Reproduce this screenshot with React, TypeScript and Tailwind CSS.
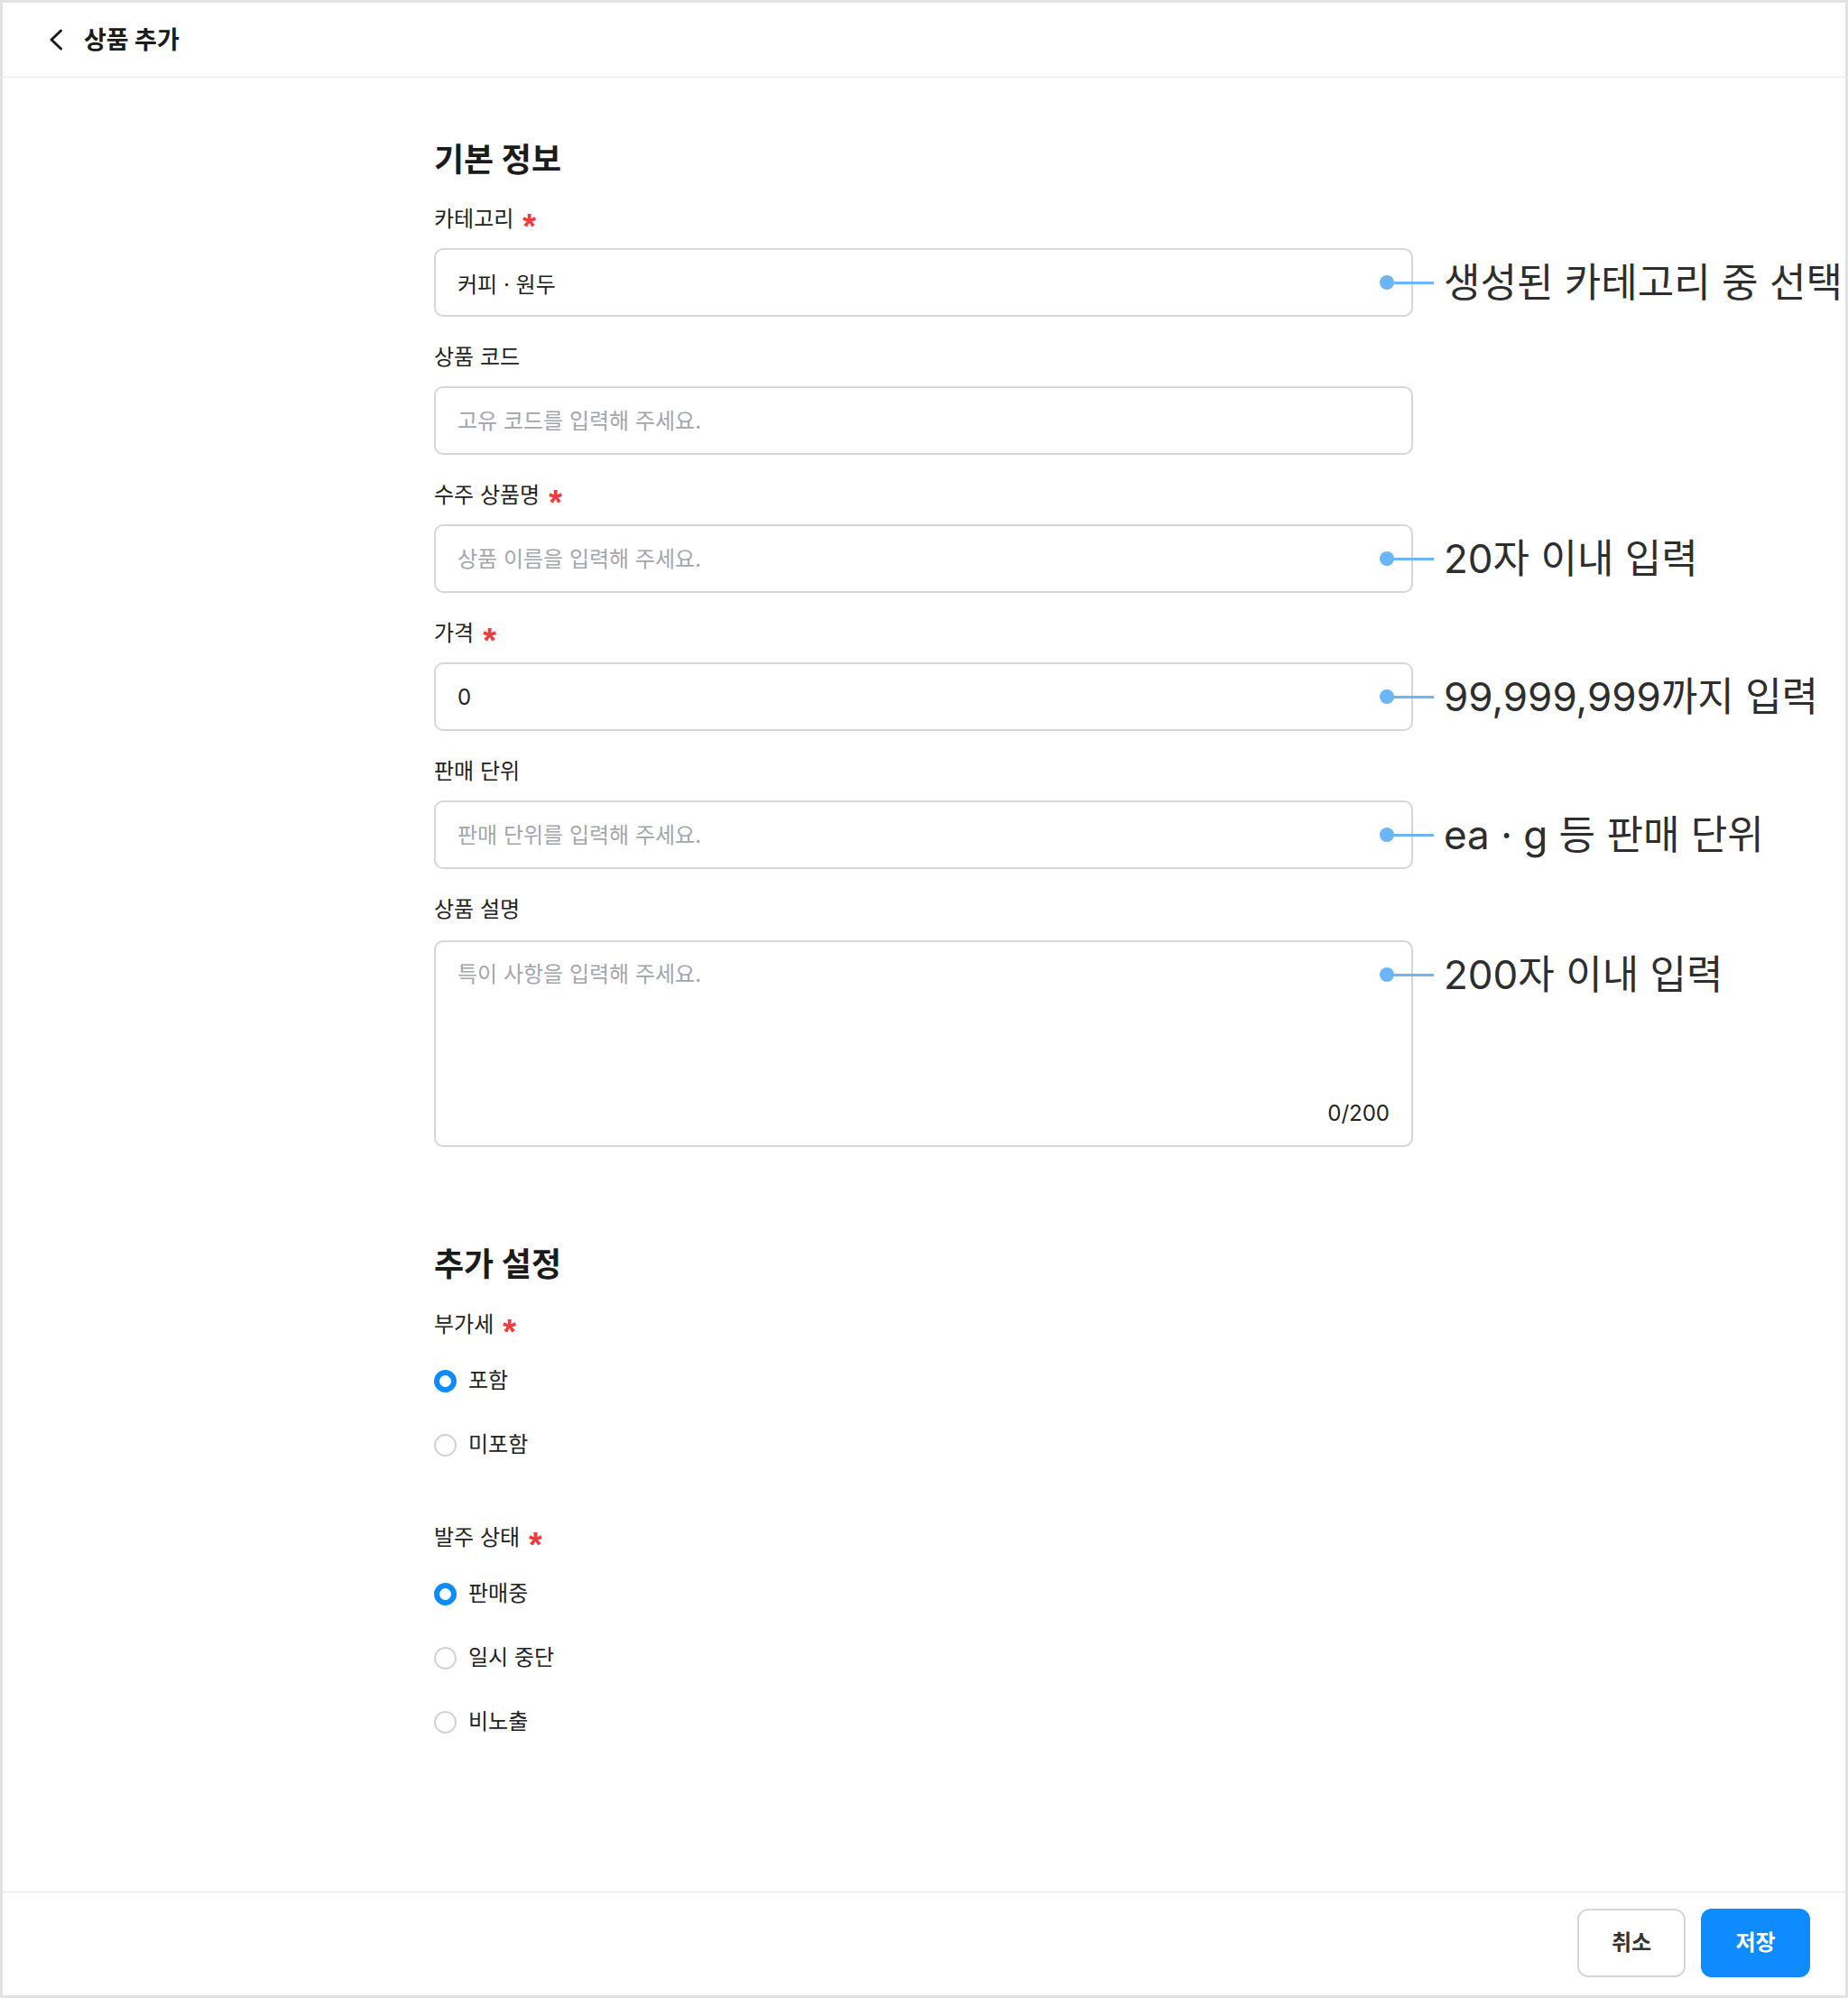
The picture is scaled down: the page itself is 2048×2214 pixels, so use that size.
import type { ReactNode } from "react";

const ui = "font-['Inter','Noto_Sans_CJK_KR',sans-serif]";

function Star() {
  return (
    <span className="relative top-[8px] font-['Liberation_Sans',sans-serif] text-[38px] font-bold leading-none text-[#f23a3f]">
      *
    </span>
  );
}

function Label({ children, required }: { children: ReactNode; required?: boolean }) {
  return (
    <div className="flex h-[30px] items-center gap-[10px] text-[24px] leading-[30px] text-[#222]">
      <span>{children}</span>
      {required && <Star />}
    </div>
  );
}

function Callout({ text }: { text: string }) {
  return (
    <div className="pointer-events-none absolute left-[1048px] top-[38px] flex -translate-y-1/2 items-center">
      <span className="h-4 w-4 rounded-full bg-[#6cb6f8]" />
      <span className="-ml-1 h-[3px] w-[48px] bg-[#6cb6f8]" />
      <span className="ml-[11px] whitespace-nowrap font-['Inter','Noto_Sans_CJK_KR',sans-serif] text-[44px] leading-none text-[#2e2e2e]">
        {text}
      </span>
    </div>
  );
}

function Field({
  label,
  required,
  value,
  placeholder,
  note,
}: {
  label: string;
  required?: boolean;
  value?: string;
  placeholder?: string;
  note?: string;
}) {
  return (
    <div className="flex flex-col gap-[17px]">
      <Label required={required}>{label}</Label>
      <div className="relative h-[76px] w-[1085px]">
        <input
          readOnly
          value={value ?? ""}
          placeholder={placeholder}
          className="h-full w-full rounded-[10px] border-2 border-[#d7d7d9] bg-white px-[24px] text-[24px] text-[#222] outline-none placeholder:text-[#a3a6ad]"
        />
        {note && <Callout text={note} />}
      </div>
    </div>
  );
}

function Radio({ label, checked }: { label: string; checked?: boolean }) {
  return (
    <label className="flex h-[30px] items-center gap-[13px] text-[24px] text-[#222]">
      <span
        className={
          checked
            ? "h-[25px] w-[25px] rounded-full border-[6px] border-[#0d8bff] bg-white"
            : "h-[25px] w-[25px] rounded-full border-2 border-[#d2d2d4] bg-white"
        }
      />
      {label}
    </label>
  );
}

export default function App() {
  return (
    <div className={`flex h-[2214px] w-[2048px] flex-col overflow-hidden border-[3px] border-[#e2e2e2] bg-white ${ui}`}>
      <header className="flex h-[83px] shrink-0 items-center gap-[23px] border-b border-[#e8e8e8] pl-[51px]">
        <svg width="16" height="24" viewBox="0 0 16 24" fill="none">
          <path d="M13.5 2 L3 12 L13.5 22" stroke="#1b1b1b" strokeWidth="3" strokeLinecap="round" strokeLinejoin="round" />
        </svg>
        <h1 className="text-[27px] font-bold leading-none text-[#1b1b1b]">상품 추가</h1>
      </header>

      <main className="flex-1 pl-[478px] pt-[69px]">
        <h2 className="h-[44px] text-[36px] font-bold leading-[44px] text-[#1b1b1b]">기본 정보</h2>
        <div className="mt-[29px] flex flex-col gap-[30px]">
          <Field label="카테고리" required value="커피 · 원두" note="생성된 카테고리 중 선택" />
          <Field label="상품 코드" placeholder="고유 코드를 입력해 주세요." />
          <Field label="수주 상품명" required placeholder="상품 이름을 입력해 주세요." note="20자 이내 입력" />
          <Field label="가격" required value="0" note="99,999,999까지 입력" />
          <Field label="판매 단위" placeholder="판매 단위를 입력해 주세요." note="ea · g 등 판매 단위" />
          <div className="flex flex-col gap-[19px]">
            <Label>상품 설명</Label>
            <div className="relative h-[229px] w-[1085px]">
              <textarea
                readOnly
                placeholder="특이 사항을 입력해 주세요."
                className="h-full w-full resize-none rounded-[10px] border-2 border-[#d7d7d9] bg-white px-[24px] pt-[21px] text-[24px] leading-[30px] text-[#222] outline-none placeholder:text-[#a3a6ad]"
              />
              <span className="absolute bottom-[22px] right-[26px] text-[24px] leading-[30px] text-[#222]">0/200</span>
              <Callout text="200자 이내 입력" />
            </div>
          </div>
        </div>

        <h2 className="mt-[108px] h-[44px] text-[36px] font-bold leading-[44px] text-[#1b1b1b]">추가 설정</h2>
        <div className="mt-[30px]">
          <Label required>부가세</Label>
        </div>
        <div className="mt-[32px] flex flex-col gap-[41px]">
          <Radio label="포함" checked />
          <Radio label="미포함" />
        </div>

        <div className="mt-[73px]">
          <Label required>발주 상태</Label>
        </div>
        <div className="mt-[32px] flex flex-col gap-[41px]">
          <Radio label="판매중" checked />
          <Radio label="일시 중단" />
          <Radio label="비노출" />
        </div>
      </main>

      <footer className="flex h-[115px] shrink-0 items-start justify-end gap-[17px] border-t border-[#e8e8e8] pr-[39px] pt-[18px]">
        <button className="h-[76px] w-[120px] rounded-[12px] border-2 border-[#d7d7d9] bg-white text-[24px] font-semibold text-[#333]">
          취소
        </button>
        <button className="h-[76px] w-[121px] rounded-[12px] bg-[#0d8bff] text-[24px] font-semibold text-white">
          저장
        </button>
      </footer>
    </div>
  );
}
